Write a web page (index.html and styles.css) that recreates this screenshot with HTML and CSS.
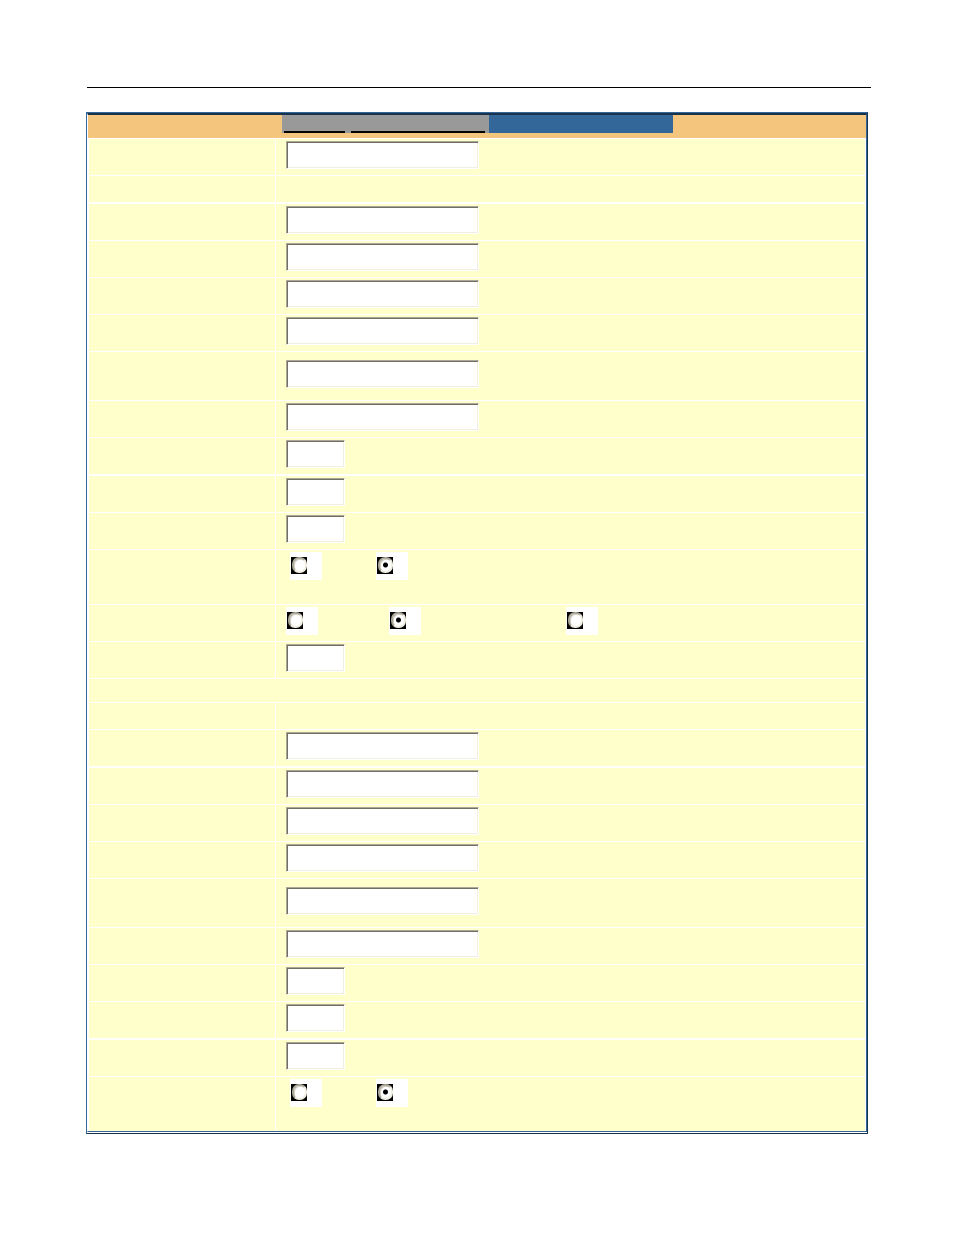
FILE: index.html
```html
<!DOCTYPE html>
<html lang="en">
<head>
    <meta charset="UTF-8">
    <meta name="viewport" content="width=device-width, initial-scale=1.0">
    <title>Settings</title>
    <link rel="stylesheet" href="styles.css">
</head>
<body>

<hr>

<form class="frame">
    <table class="settings">
        <colgroup><col class="col-name"><col></colgroup>
        <tr class="head">
            <th></th>
            <th>
                <div class="tabs">
                    <div class="links">
                        <a class="link-short" href="#" aria-label="Basic"></a>
                        <a class="link-long" href="#" aria-label="Advanced"></a>
                    </div>
                    <div class="current"></div>
                </div>
            </th>
        </tr>

        <!-- first group -->
        <tr><td></td><td><input type="text" class="wide" aria-label="Field 1"></td></tr>
        <tr class="info"><td></td><td></td></tr>
        <tr class="ruled"><td></td><td><input type="text" class="wide" aria-label="Field 2"></td></tr>
        <tr><td></td><td><input type="text" class="wide" aria-label="Field 3"></td></tr>
        <tr><td></td><td><input type="text" class="wide" aria-label="Field 4"></td></tr>
        <tr><td></td><td><input type="text" class="wide" aria-label="Field 5"></td></tr>
        <tr class="tall"><td></td><td><input type="text" class="wide" aria-label="Field 6"></td></tr>
        <tr><td></td><td><input type="text" class="wide" aria-label="Field 7"></td></tr>
        <tr><td></td><td><input type="text" class="short" aria-label="Field 8"></td></tr>
        <tr class="ruled"><td></td><td><input type="text" class="short" aria-label="Field 9"></td></tr>
        <tr><td></td><td><input type="text" class="short" aria-label="Field 10"></td></tr>
        <tr class="choice">
            <td></td>
            <td>
                <div class="radios two">
                    <label><input type="radio" name="r1" aria-label="Option 1"></label>
                    <label><input type="radio" name="r1" aria-label="Option 2" checked></label>
                </div>
            </td>
        </tr>
        <tr>
            <td></td>
            <td>
                <div class="radios three">
                    <label><input type="radio" name="r2" aria-label="Option 1"></label>
                    <label><input type="radio" name="r2" aria-label="Option 2" checked></label>
                    <label><input type="radio" name="r2" aria-label="Option 3"></label>
                </div>
            </td>
        </tr>
        <tr><td></td><td><input type="text" class="short" aria-label="Field 11"></td></tr>

        <!-- second group -->
        <tr class="section"><td colspan="2"></td></tr>
        <tr class="info"><td></td><td></td></tr>
        <tr><td></td><td><input type="text" class="wide" aria-label="Field 12"></td></tr>
        <tr class="ruled"><td></td><td><input type="text" class="wide" aria-label="Field 13"></td></tr>
        <tr><td></td><td><input type="text" class="wide" aria-label="Field 14"></td></tr>
        <tr><td></td><td><input type="text" class="wide" aria-label="Field 15"></td></tr>
        <tr class="tall"><td></td><td><input type="text" class="wide" aria-label="Field 16"></td></tr>
        <tr><td></td><td><input type="text" class="wide" aria-label="Field 17"></td></tr>
        <tr><td></td><td><input type="text" class="short" aria-label="Field 18"></td></tr>
        <tr><td></td><td><input type="text" class="short" aria-label="Field 19"></td></tr>
        <tr class="ruled"><td></td><td><input type="text" class="short" aria-label="Field 20"></td></tr>
        <tr class="choice">
            <td></td>
            <td>
                <div class="radios two">
                    <label><input type="radio" name="r3" aria-label="Option 1"></label>
                    <label><input type="radio" name="r3" aria-label="Option 2" checked></label>
                </div>
            </td>
        </tr>
    </table>
</form>

</body>
</html>
```
FILE: styles.css
```css
* {
    box-sizing: border-box;
}

body {
    margin: 0;
    padding: 87px 83px 40px 86px;
    background: #fff;
    font-family: "Liberation Sans", Arial, sans-serif;
    font-size: 13px;
}

hr {
    height: 1px;
    margin: 0 0 24px 1px;
    border: none;
    background: #000;
}

.frame {
    margin-right: 3px;
    padding-bottom: 1px;
    border: 1px solid #336699;
    border-right-color: #1a334d;
    border-bottom-color: #1a334d;
}

.settings {
    width: 100%;
    table-layout: fixed;
    border-collapse: separate;
    border-spacing: 0;
    border-top: 2px solid #1a334d;
    border-left: 1px solid #fff;
    border-right: 1px solid #336699;
    border-bottom: 1px solid #336699;
}

.col-name {
    width: 188px;
}

th {
    height: 23px;
    padding: 0;
    background: #f4c57d;
    vertical-align: top;
}

th + th {
    padding-left: 6px;
}

.tabs {
    display: flex;
    height: 18px;
}

.links {
    display: flex;
    gap: 6px;
    width: 207px;
    padding: 0 4px 0 2px;
    background: #999;
}

.links a {
    border-bottom: 2px solid #000;
}

.link-short {
    width: 61px;
}

.link-long {
    flex: 1;
}

.current {
    width: 184px;
    background: #336699;
}

td {
    height: 37px;
    padding: 2px 0 6px 10px;
    background: #ffffcc;
    border-top: 1px solid #fff;
    vertical-align: middle;
}

td:first-child {
    border-left: 1px solid #fff;
    border-right: 1px solid #fff;
}

td:last-child {
    border-right: 1px solid #fff;
}

.info td {
    height: 27px;
}

/* thicker line above */
.ruled td {
    height: 38px;
    border-top-width: 2px;
}

.section td {
    height: 24px;
}

.tall td {
    height: 49px;
}

.choice td {
    height: 55px;
    vertical-align: top;
}

/* sunken text boxes */
input[type="text"] {
    display: block;
    height: 28px;
    padding: 2px 4px;
    border: 1px solid #fff;
    border-top-color: #aca899;
    border-left-color: #aca899;
    background: #fff;
    box-shadow: inset 1px 1px #716f64, inset -1px -1px #f1efe2;
    outline: none;
}

.wide {
    width: 193px;
}

.short {
    width: 59px;
}

.radios {
    display: grid;
}

.two {
    grid-template-columns: 86px 32px;
    padding-left: 4px;
}

.three {
    grid-template-columns: 103px 177px 32px;
}

.radios label {
    display: block;
    width: 32px;
    height: 28px;
    padding: 5px 1px;
    background: #fff;
}

input[type="radio"] {
    display: block;
    appearance: none;
    width: 16px;
    height: 17px;
    margin: 0;
    padding: 0 0 0 1px;
    background: #000;
}

input[type="radio"]::before {
    content: "";
    display: block;
    box-sizing: border-box;
    width: 15px;
    height: 16px;
    border: 2px solid #f1efe2;
    border-top-color: #aca899;
    border-left-color: #aca899;
    border-radius: 7px;
    background: #fff;
    box-shadow: inset 1px 1px #d4d0c4;
}

input[type="radio"]:checked::before {
    background: radial-gradient(circle, #000 2px, #fff 3px);
}
```
